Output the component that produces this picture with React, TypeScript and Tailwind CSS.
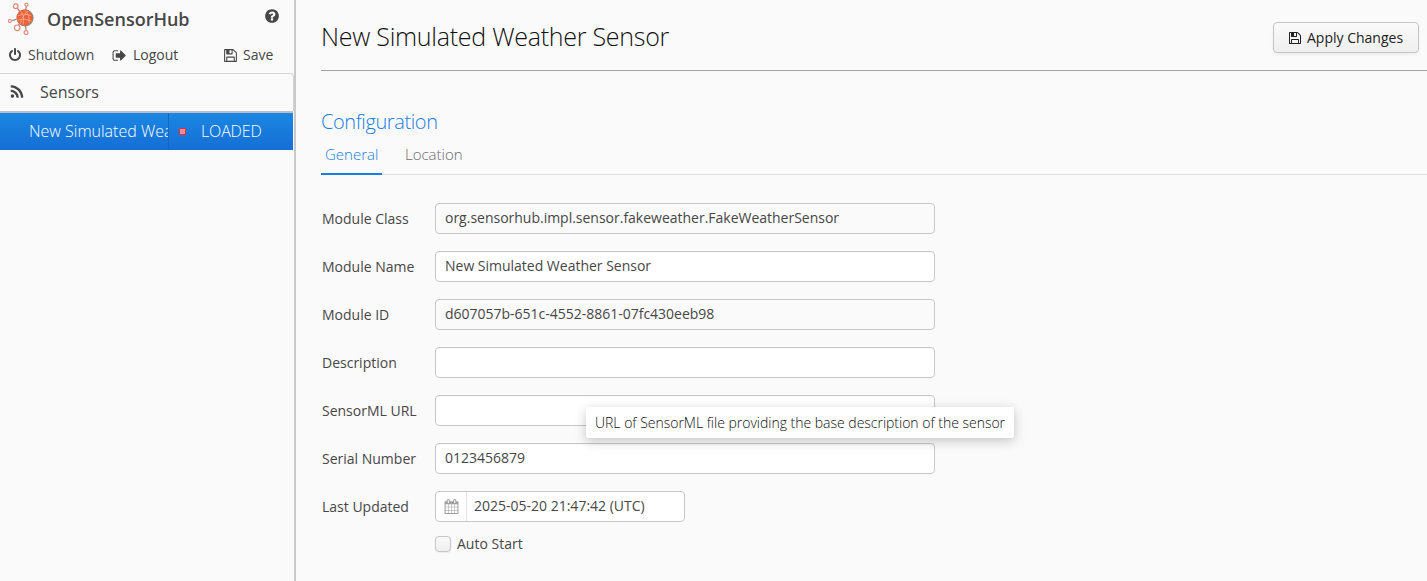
import React from "react";

const ICONS = {
  power:
    "M1664 896q0 156-61 298t-164 245-245 164-298 61-298-61-245-164-164-245-61-298q0-182 80.5-343t226.5-270q43-32 95.5-25t83.5 50q32 42 24.5 94.5t-49.5 84.5q-98 74-151.5 181t-53.5 228q0 104 40.5 198.5t109.5 163.5 163.5 109.5 198.5 40.5 198.5-40.5 163.5-109.5 109.5-163.5 40.5-198.5q0-121-53.5-228t-151.5-181q-42-32-49.5-84.5t24.5-94.5q31-43 84-50t95 25q146 109 226.5 270t80.5 343zm-640-768v640q0 52-38 90t-90 38-90-38-38-90v-640q0-52 38-90t90-38 90 38 38 90z",
  signOut:
    "M704 1440q0 4 1 20t.5 26.5-3 23.5-10 19.5-20.5 6.5h-320q-119 0-203.5-84.5t-84.5-203.5v-704q0-119 84.5-203.5t203.5-84.5h320q13 0 22.5 9.5t9.5 22.5q0 4 1 20t.5 26.5-3 23.5-10 19.5-20.5 6.5h-320q-66 0-113 47t-47 113v704q0 66 47 113t113 47h312l11.5 1 11.5 3 8 5.5 7 9 2 13.5zm928-544q0 26-19 45l-544 544q-19 19-45 19t-45-19-19-45v-288h-448q-26 0-45-19t-19-45v-384q0-26 19-45t45-19h448v-288q0-26 19-45t45-19 45 19l544 544q19 19 19 45z",
  save:
    "M512 1536h768v-384h-768v384zm896 0h128v-896q0-14-10-38.5t-20-34.5l-281-281q-10-10-34-20t-39-10v416q0 40-28 68t-68 28h-576q-40 0-68-28t-28-68v-416h-128v1280h128v-416q0-40 28-68t68-28h832q40 0 68 28t28 68v416zm-384-928v-320q0-13-9.5-22.5t-22.5-9.5h-192q-13 0-22.5 9.5t-9.5 22.5v320q0 13 9.5 22.5t22.5 9.5h192q13 0 22.5-9.5t9.5-22.5zm640 32v928q0 40-28 68t-68 28h-1344q-40 0-68-28t-28-68v-1344q0-40 28-68t68-28h928q40 0 88 20t76 48l280 280q28 28 48 76t20 88z",
  question:
    "M1024 1376v-192q0-14-9-23t-23-9h-192q-14 0-23 9t-9 23v192q0 14 9 23t23 9h192q14 0 23-9t9-23zm256-672q0-88-55.5-163t-138.5-116-170-41q-243 0-371 213-15 24 8 42l132 100q7 6 19 6 16 0 25-12 53-68 86-92 34-24 86-24 48 0 85.5 26t37.5 59q0 38-20 61t-68 45q-63 28-115.5 86.5t-52.5 125.5v36q0 14 9 23t23 9h192q14 0 23-9t9-23q0-19 21.5-49.5t54.5-49.5q32-18 49-28.5t46-35 44.5-48 28-60.5 12.5-81zm384 192q0 209-103 385.5t-279.5 279.5-385.5 103-385.5-103-279.5-279.5-103-385.5 103-385.5 279.5-279.5 385.5-103 385.5 103 279.5 279.5 103 385.5z",
  rss:
    "M576 1344q0 80-56 136t-136 56-136-56-56-136 56-136 136-56 136 56 56 136zm512 123q2 28-17 48-18 21-47 21h-135q-25 0-43-16.5t-20-41.5q-22-229-184.5-391.5t-391.5-184.5q-25-2-41.5-20t-16.5-43v-135q0-29 21-47 17-17 43-17h5q160 13 306 80.5t259 181.5q114 113 181.5 259t80.5 306zm512 2q2 27-18 47-18 20-46 20h-143q-26 0-44.5-17.5t-19.5-42.5q-12-215-101-408.5t-231.5-336-336-231.5-408.5-102q-25-1-42.5-19.5t-17.5-43.5v-143q0-28 20-46 18-18 44-18h3q262 13 501.5 120t425.5 294q187 186 294 425.5t120 501.5z",
  calendar:
    "M192 1664h288v-288h-288v288zm352 0h320v-288h-320v288zm-352-352h288v-320h-288v320zm352 0h320v-320h-320v320zm-352-384h288v-288h-288v288zm736 736h320v-288h-320v288zm-384-736h320v-288h-320v288zm768 736h288v-288h-288v288zm-384-352h320v-320h-320v320zm-352-864v-288q0-13-9.5-22.5t-22.5-9.5h-64q-13 0-22.5 9.5t-9.5 22.5v288q0 13 9.5 22.5t22.5 9.5h64q13 0 22.5-9.5t9.5-22.5zm736 864h288v-320h-288v320zm-384-384h320v-288h-320v288zm384 0h288v-288h-288v288zm32-480v-288q0-13-9.5-22.5t-22.5-9.5h-64q-13 0-22.5 9.5t-9.5 22.5v288q0 13 9.5 22.5t22.5 9.5h64q13 0 22.5-9.5t9.5-22.5zm384-64v1280q0 52-38 90t-90 38h-1408q-52 0-90-38t-38-90v-1280q0-52 38-90t90-38h128v-96q0-66 47-113t113-47h64q66 0 113 47t47 113v96h384v-96q0-66 47-113t113-47h64q66 0 113 47t47 113v96h128q52 0 90 38t38 90z",
};

function Icon({ name, className = "" }: { name: keyof typeof ICONS; className?: string }) {
  return (
    <svg viewBox="0 0 1792 1792" fill="currentColor" className={`shrink-0 ${className}`}>
      <path d={ICONS[name]} />
    </svg>
  );
}

function Logo() {
  return (
    <svg viewBox="0 0 28 34" className="h-[34px] w-7 shrink-0">
      <g fill="none" stroke="#a07f74" strokeWidth="1.2">
        <path d="M8.8 5.6 12 9.5M18.4 4.5 17.5 8M3.5 18.5 8.5 17.4M10.5 23l2-2.6M18 28 17.5 23" />
      </g>
      <g fill="#fafafa" stroke="#df8b72" strokeWidth="1.2">
        <circle cx="7.7" cy="4.2" r="2.3" />
        <circle cx="18.5" cy="2.6" r="1.6" />
        <circle cx="1.9" cy="19" r="1.5" />
        <circle cx="9.2" cy="25.8" r="2.8" />
        <circle cx="18" cy="30.6" r="1.9" />
      </g>
      <circle cx="17.1" cy="16.1" r="8.5" fill="#8b8582" />
      <circle cx="16.5" cy="15.6" r="8" fill="#ed6339" />
      <g fill="none" stroke="#f8b49c" strokeWidth="0.7">
        <path d="M10 13.5q6-3 13 0M9.6 18q7-2 14 1M13 9.5q4 5 2 13M20 9q-7 6-7.5 13M17 8.3q5 5 4 12.5" />
      </g>
    </svg>
  );
}

function Field({ label, children }: { label: string; children?: React.ReactNode }) {
  return (
    <div className="flex h-12 items-start">
      <div className="w-[114px] shrink-0 pl-px pt-[5px] text-[14px] leading-[22px]">{label}</div>
      {children}
    </div>
  );
}

function TextBox({ value = "", readOnly = false }: { value?: string; readOnly?: boolean }) {
  return (
    <div
      className={`flex h-[31px] w-[500px] items-center rounded-[4px] border border-[#c8c8c8] px-[9px] pb-[3px] text-[14px] tracking-[-0.01px] ${
        readOnly ? "bg-[#fafafa]" : "bg-white shadow-[inset_0_1px_0_#f7f7f7]"
      }`}
    >
      {value}
    </div>
  );
}

export default function App() {
  return (
    <div className="flex h-[581px] w-full overflow-hidden whitespace-nowrap bg-[#fafafa] font-['Open_Sans',sans-serif] text-[14px] text-[#474747]">
      <aside className="flex w-[296px] shrink-0 flex-col border-r-2 border-[#c9c9c9]">
        <div className="flex h-[38px] items-start pl-2 pt-[2px]">
          <Logo />
          <h1 className="ml-[11px] mt-[4px] w-[217px] text-[18px] font-semibold leading-[26px]">OpenSensorHub</h1>
          <Icon name="question" className="mt-[6px] size-4" />
        </div>
        <div className="flex h-[35px] items-center pb-px pl-2">
          <Icon name="power" className="size-[14px]" />
          <span className="-mt-px ml-[6px] w-[84px]">Shutdown</span>
          <Icon name="signOut" className="size-[15px]" />
          <span className="-mt-px ml-[6px] w-[90px]">Logout</span>
          <Icon name="save" className="size-[15px]" />
          <span className="-mt-px ml-[5px]">Save</span>
        </div>
        <div className="flex h-[38px] items-center rounded-tr-[4px] border-r border-t border-[#d4d4d4] pb-px pl-[9px] text-[16px]">
          <Icon name="rss" className="size-4" />
          <span className="-mt-px ml-[15px]">Sensors</span>
        </div>
        <div className="flex h-[39px] w-[293px] border-t-2 border-[#bebfc3] bg-linear-to-b from-[#1b87e3] to-[#166ed5] text-[16px] font-light text-white">
          <div className="flex w-[169px] items-center overflow-hidden border-r border-[#1569bd] pb-[2px] pl-[29px]">New Simulated Weather Sensor</div>
          <div className="flex items-center pb-[2px]">
            <span className="ml-[10px] mt-px size-[7px] border border-[#e02f43] bg-[#f08c92]" />
            <span className="ml-[15px] tracking-[-0.15px]">LOADED</span>
          </div>
        </div>
      </aside>

      <main className="flex min-w-0 flex-1 flex-col pl-[25px]">
        <header className="flex h-[71px] items-start justify-between border-b border-[#a5a5a5] pr-2">
          <h2 className="mt-[17px] text-[25px] font-light leading-[38px] tracking-[-0.26px] text-[#111]">New Simulated Weather Sensor</h2>
          <button className="mt-[22px] flex h-[31px] w-[146px] items-center rounded-[4px] border border-[#c5c5c5] bg-linear-to-b from-[#fafafa] to-[#efefef] pl-[14px] text-[14px] text-[#222] shadow-[0_2px_3px_rgba(0,0,0,0.05)]">
            <Icon name="save" className="size-[14px]" />
            <span className="ml-[5px]">Apply Changes</span>
          </button>
        </header>

        <h3 className="mt-[37px] text-[20px] font-light leading-[27px] tracking-[-0.4px] text-[#197de1]">Configuration</h3>
        <nav className="flex h-[40px] items-stretch border-b border-[#dfdfdf] text-[15px] font-light">
          <div className="-mb-px w-[61px] border-b-2 border-[#197de1] pl-1 leading-[39px] text-[#197de1]">General</div>
          <div className="ml-[23px] leading-[39px] text-[#6b6b6b]">Location</div>
        </nav>

        <section className="flex flex-col pt-[28px]">
          <Field label="Module Class">
            <TextBox value="org.sensorhub.impl.sensor.fakeweather.FakeWeatherSensor" readOnly />
          </Field>
          <Field label="Module Name">
            <TextBox value="New Simulated Weather Sensor" />
          </Field>
          <Field label="Module ID">
            <TextBox value="d607057b-651c-4552-8861-07fc430eeb98" readOnly />
          </Field>
          <Field label="Description">
            <TextBox />
          </Field>
          <Field label="SensorML URL">
            <div className="relative">
              <TextBox />
              <div className="absolute left-[151px] top-[12px] flex h-[31px] w-[428px] items-center rounded-[3px] bg-white/95 pl-[9px] text-[14px] font-light tracking-[-0.015px] text-[#111] shadow-[0_3px_12px_rgba(0,0,0,0.22)]">
                URL of SensorML file providing the base description of the sensor
              </div>
            </div>
          </Field>
          <Field label="Serial Number">
            <TextBox value="0123456879" />
          </Field>
          <Field label="Last Updated">
            <div className="flex h-[31px] w-[250px] rounded-[4px] border border-[#c8c8c8] bg-white text-[14px]">
              <div className="flex w-[31px] items-center justify-center border-r border-[#e4e4e4] pb-px text-[#a0a0a0]">
                <Icon name="calendar" className="size-[15px]" />
              </div>
              <div className="flex items-center pb-[3px] pl-[7px]">2025-05-20 21:47:42 (UTC)</div>
            </div>
          </Field>
          <div className="-mt-[4px] ml-[114px] flex h-[18px] items-center">
            <span className="size-4 rounded-[4px] border border-[#c5c5c5] bg-linear-to-b from-[#fafafa] to-[#efefef] shadow-[0_1px_2px_rgba(0,0,0,0.06)]" />
            <span className="-mt-[2px] ml-[6px]">Auto Start</span>
          </div>
        </section>
      </main>
    </div>
  );
}
